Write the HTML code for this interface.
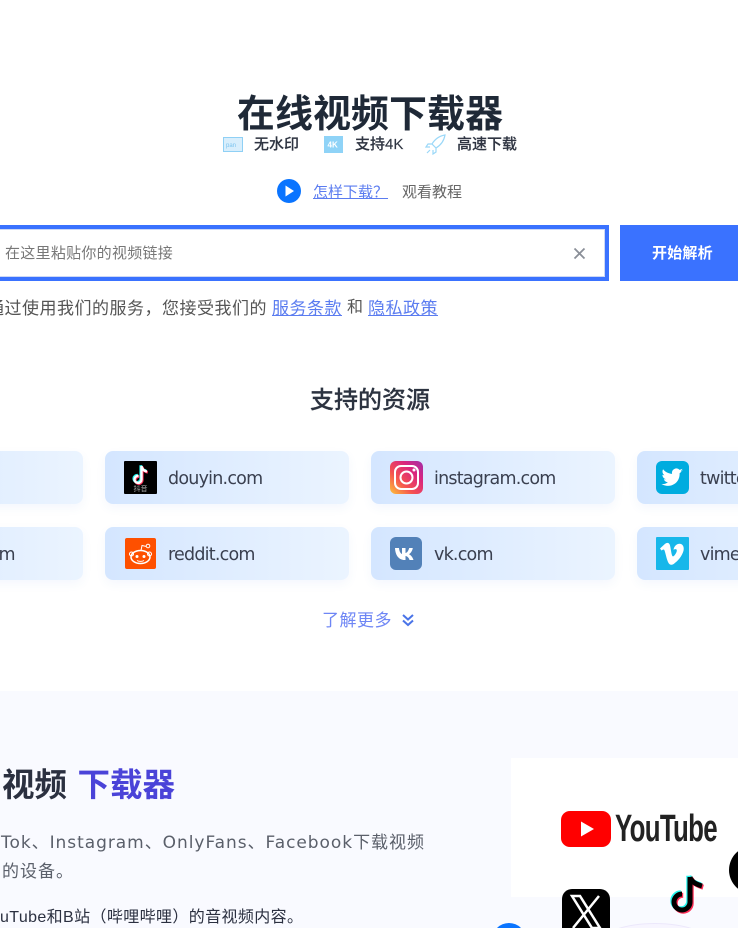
<!DOCTYPE html>
<html lang="zh"><head><meta charset="utf-8"><title>在线视频下载器</title>
<style>
html,body{margin:0;padding:0;background:#fff;width:738px;height:928px;overflow:hidden}
#w{width:738px;height:928px;overflow:hidden;position:relative;font-family:"Liberation Sans","Noto Sans CJK SC",sans-serif;color:#333}
.a{position:absolute;white-space:nowrap;line-height:1}
.card{position:absolute;width:244px;height:53px;border-radius:8px;background:linear-gradient(90deg,#d4e6ff,#ebf4ff);box-shadow:0 4px 10px rgba(60,120,220,.06)}
.card svg{position:absolute;left:19px;top:10px;width:33px;height:33px}
.card span{position:absolute;left:63px;top:18px;font:17.5px/20px "DejaVu Sans",sans-serif;letter-spacing:-.78px;color:#3a4050;white-space:nowrap}
.l{color:#5b7cf0;text-decoration:underline}
</style></head><body><div id="w">
<div class="a" style="left:237px;top:96px;font-size:38px;font-weight:700;color:#1f2937">在线视频下载器</div>

<svg class="a" style="left:223px;top:137px" width="20" height="15" viewBox="0 0 20 15"><rect x=".5" y=".5" width="19" height="14" fill="#d8eefc" stroke="#8fd0f5"/><text x="3" y="10" font-size="6" fill="#7cc4ef" font-family="Liberation Sans">pan</text></svg>
<div class="a" style="left:254px;top:137px;font-size:15px;font-weight:500;color:#2f3542;-webkit-text-stroke:.15px #2f3542">无水印</div>
<svg class="a" style="left:324px;top:136px" width="19" height="17" viewBox="0 0 19 17"><rect width="19" height="17" fill="#8fd3f7"/><text x="3.5" y="11.5" font-size="8" font-weight="700" fill="#fff" font-family="Liberation Sans">4K</text></svg>
<div class="a" style="left:355px;top:137px;font-size:15px;font-weight:500;color:#2f3542;-webkit-text-stroke:.15px #2f3542">支持4K</div>
<svg class="a" style="left:425px;top:134px" width="21" height="21" viewBox="0 0 21 21" fill="none" stroke="#9bd8f8" stroke-width="1.2"><path d="M20 1C14 2 10 5 7 10l4 4c5-3 8-7 9-13zM7 10H3L1 13h4M11 14v4l-3 2v-4M5 16l-3 3"/></svg>
<div class="a" style="left:457px;top:137px;font-size:15px;font-weight:500;color:#2f3542;-webkit-text-stroke:.15px #2f3542">高速下载</div>

<svg class="a" style="left:277px;top:179px" width="24" height="24" viewBox="0 0 24 24"><circle cx="12" cy="12" r="12" fill="#0a74ff"/><path d="M8.500 6.500L17 12l-8.500 5.500z" fill="#fff"/></svg>
<div class="a l" style="left:313px;top:185px;font-size:15px">怎样下载？</div>
<div class="a" style="left:402px;top:185px;font-size:15px;color:#666">观看教程</div>

<div class="a" style="left:-10px;top:225px;width:611px;height:48px;border:4px solid #3a72ff;background:#fff;box-shadow:inset 0 0 0 1px #cdd8f5"></div>
<div class="a" style="left:5px;top:246px;font-size:15px;letter-spacing:.28px;color:#777">在这里粘贴你的视频链接</div>
<svg class="a" style="left:573px;top:247px" width="13" height="13" viewBox="0 0 13 13" stroke="#8a8f98" stroke-width="1.800"><path d="M1.500 1.500l10 10M11.500 1.500l-10 10"/></svg>
<div class="a" style="left:620px;top:225px;width:118px;height:56px;background:#3a72ff"></div>
<div class="a" style="left:652px;top:246px;font-size:15px;font-weight:700;letter-spacing:.2px;color:#fff">开始解析</div>

<div class="a" style="left:-13px;top:300px;font-size:17px;letter-spacing:.5px;color:#555">通过使用我们的服务，您接受我们的</div>
<div class="a l" style="left:272px;top:300px;font-size:17px;letter-spacing:.5px">服务条款</div>
<div class="a" style="left:347px;top:300px;font-size:16px;color:#555">和</div>
<div class="a l" style="left:368px;top:300px;font-size:17px;letter-spacing:.5px">隐私政策</div>

<div class="a" style="left:310px;top:389px;font-size:24px;font-weight:500;color:#2c3340;-webkit-text-stroke:.15px #2c3340">支持的资源</div>

<div class="card" style="left:-161px;top:451px"></div>
<div class="card" style="left:105px;top:451px"><svg viewBox="0 0 33 33"><rect width="33" height="33" rx="1" fill="#000"/><path d="M17.500 5v13.500a3.500 3.500 0 1 1-3-3.500M17.500 5c.5 3 2.500 5 5.500 5.500" fill="none" stroke="#25f4ee" stroke-width="2.600" transform="translate(-.8 -.8)"/><path d="M17.500 5v13.500a3.500 3.500 0 1 1-3-3.500M17.500 5c.5 3 2.500 5 5.500 5.500" fill="none" stroke="#fe2c55" stroke-width="2.600" transform="translate(.8 .8)"/><path d="M17.500 5v13.500a3.500 3.500 0 1 1-3-3.500M17.500 5c.5 3 2.500 5 5.500 5.500" fill="none" stroke="#fff" stroke-width="2.400"/><text x="16.500" y="30" text-anchor="middle" font-size="7" fill="#aaa" font-family="Noto Sans CJK SC,sans-serif">抖音</text></svg><span>douyin.com</span></div>
<div class="card" style="left:371px;top:451px"><svg viewBox="0 0 33 33"><defs><linearGradient id="g" x1="0" y1="1" x2="1" y2="0"><stop offset="0" stop-color="#fdc43a"/><stop offset=".35" stop-color="#f5534f"/><stop offset=".7" stop-color="#d9257f"/><stop offset="1" stop-color="#a02fa8"/></linearGradient></defs><rect width="33" height="33" rx="6" fill="url(#g)"/><rect x="5" y="5" width="23" height="23" rx="6" fill="none" stroke="#fff" stroke-width="2"/><circle cx="16.500" cy="16.500" r="6" fill="none" stroke="#fff" stroke-width="2"/><circle cx="24" cy="9" r="1.500" fill="#fff"/></svg><span>instagram.com</span></div>
<div class="card" style="left:637px;top:451px"><svg viewBox="0 0 33 33"><rect width="33" height="33" rx="6" fill="#00acdf"/><path d="M27 9.500c-.8.4-1.600.6-2.500.7.900-.5 1.600-1.400 1.900-2.400-.8.500-1.800.9-2.800 1.100a4.400 4.400 0 0 0-7.500 4c-3.600-.2-6.900-1.900-9-4.600-1.200 2-.6 4.600 1.300 5.900-.7 0-1.400-.2-2-.5 0 2.100 1.500 4 3.500 4.400-.6.200-1.300.2-2 .1.600 1.800 2.200 3 4.100 3-1.800 1.400-4.100 2.100-6.500 1.800 6 3.800 14 1.600 17-4.800.9-1.900 1.200-4 1.100-5.900.800-.6 1.500-1.300 2.400-2.800z" fill="#fff"/></svg><span>twitter.com</span></div>

<div class="card" style="left:-161px;top:527px"><span style="left:136px">.com</span></div>
<div class="card" style="left:105px;top:527px"><svg viewBox="0 0 33 33"><rect x="1" y="1" width="31" height="31" rx="2" fill="#fe5000"/><ellipse cx="16.500" cy="20" rx="9.500" ry="6.500" fill="none" stroke="#fff" stroke-width="1.500"/><circle cx="7.500" cy="17" r="2" fill="none" stroke="#fff"/><circle cx="25.500" cy="17" r="2" fill="none" stroke="#fff"/><circle cx="13" cy="19.500" r="1.500" fill="#fff"/><circle cx="20" cy="19.500" r="1.500" fill="#fff"/><path d="M13 23.500c2 1.200 5 1.200 7 0M17 13.500l1-5 4.500 1" fill="none" stroke="#fff"/><circle cx="24" cy="9" r="1.800" fill="none" stroke="#fff"/></svg><span>reddit.com</span></div>
<div class="card" style="left:371px;top:527px"><svg viewBox="0 0 33 33"><rect width="32" height="33" rx="6" fill="#5281b8"/><path d="M5 11h4c.2 3 1.500 5.500 3 6v-6h3.500v5c1.500-.2 3-2.200 3.700-5h3.600c-.5 3-2.200 5.200-3.800 6.200 1.700.8 3.500 2.600 4.500 5.800h-4c-.7-2.300-2.200-3.800-4-4v4h-1C9 23 5.300 18.500 5 11z" fill="#fff"/></svg><span>vk.com</span></div>
<div class="card" style="left:637px;top:527px"><svg viewBox="0 0 33 33"><rect width="33" height="33" rx="1" fill="#17b7ea"/><path d="M4 11.500l1.500 2c1.500-1 2.300-1.400 2.800-.5 1 2 2 8 3.700 12 1.400 3 3.500 3.500 6 1.700 4-3 8-7.500 9.500-13 1-4-1-7-4-7-2.500 0-5.300 2-6 6 2-1 3.500-.8 3.300 1.200-.2 1.800-2.500 5.500-3.800 5.500-1.500 0-2-7-3-11-.8-3-3-3-5-1.500z" fill="#fff"/></svg><span>vimeo.com</span></div>

<div class="a" style="left:322px;top:612px;font-size:17px;letter-spacing:.5px;color:#6e86f5">了解更多</div>
<svg class="a" style="left:401px;top:614px" width="14" height="14" viewBox="0 0 14 14" fill="none" stroke="#4a74e8" stroke-width="2"><path d="M2 1l5 4.500L12 1M2 6.500l5 4.500 5-4.500"/></svg>

<div class="a" style="left:0;top:691px;width:738px;height:237px;background:#f9faff"></div>
<div class="a" style="left:2px;top:769px;font-size:32.5px;font-weight:700;color:#2b3040">视频</div>
<div class="a" style="left:77.500px;top:769px;font-size:32.5px;font-weight:700;color:#4a43d8">下载器</div>
<div class="a" style="left:1px;top:834px;font:17px/18px 'DejaVu Sans','Noto Sans CJK SC',sans-serif;letter-spacing:.96px;color:#5a5f6a">Tok、Instagram、OnlyFans、Facebook下载视频</div>
<div class="a" style="left:2px;top:863px;font-size:17px;letter-spacing:1px;color:#5a5f6a">的设备。</div>
<div class="a" style="left:0;top:910px;font-size:16px;color:#2b3040;letter-spacing:.38px">uTube和B站（哔哩哔哩）的音视频内容。</div>

<div class="a" style="left:511px;top:758px;width:227px;height:139px;background:#fff"></div>
<div class="a" style="left:600px;top:923px;width:110px;height:40px;border-radius:50%;border:1px solid #ece8fb;background:#f7f5ff;box-sizing:border-box"></div>
<svg class="a" style="left:561px;top:811px" width="50" height="36" viewBox="0 0 50 36"><rect width="50" height="36" rx="9" fill="#f00"/><path d="M20 10.500L33 18l-13 7.500z" fill="#fff"/></svg>
<div class="a" style="left:615px;top:811px;font-size:38px;line-height:36px;font-weight:700;color:#222;transform:scaleX(.68);transform-origin:0 0;letter-spacing:-1px">YouTube</div>
<svg class="a" style="left:562px;top:889px" width="48" height="39" viewBox="0 0 48 39"><path d="M0 39V10a10 10 0 0 1 10-10h28a10 10 0 0 1 10 10v29z" fill="#000"/><path d="M10 7h8l20 32H30zM37 7L11 39" fill="none" stroke="#fff" stroke-width="2.500"/></svg>
<svg class="a" style="left:668px;top:872px" width="40" height="44" viewBox="0 0 40 44" fill="none"><g stroke-width="5"><path d="M22 5v25a8 8 0 1 1-8-8M22 5c1 4 5 7 12 9" stroke="#25f4ee" transform="translate(-1.200 -1.200)"/><path d="M22 5v25a8 8 0 1 1-8-8M22 5c1 4 5 7 12 9" stroke="#fe2c55" transform="translate(1.200 1.200)"/><path d="M22 5v25a8 8 0 1 1-8-8M22 5c1 4 5 7 12 9" stroke="#000"/></g></svg>
<div class="a" style="left:729px;top:846px;width:48px;height:48px;border-radius:50%;background:#000"></div>
<div class="a" style="left:492px;top:923px;width:34px;height:34px;border-radius:50%;background:#0a74ff"></div>
</div></body></html>
